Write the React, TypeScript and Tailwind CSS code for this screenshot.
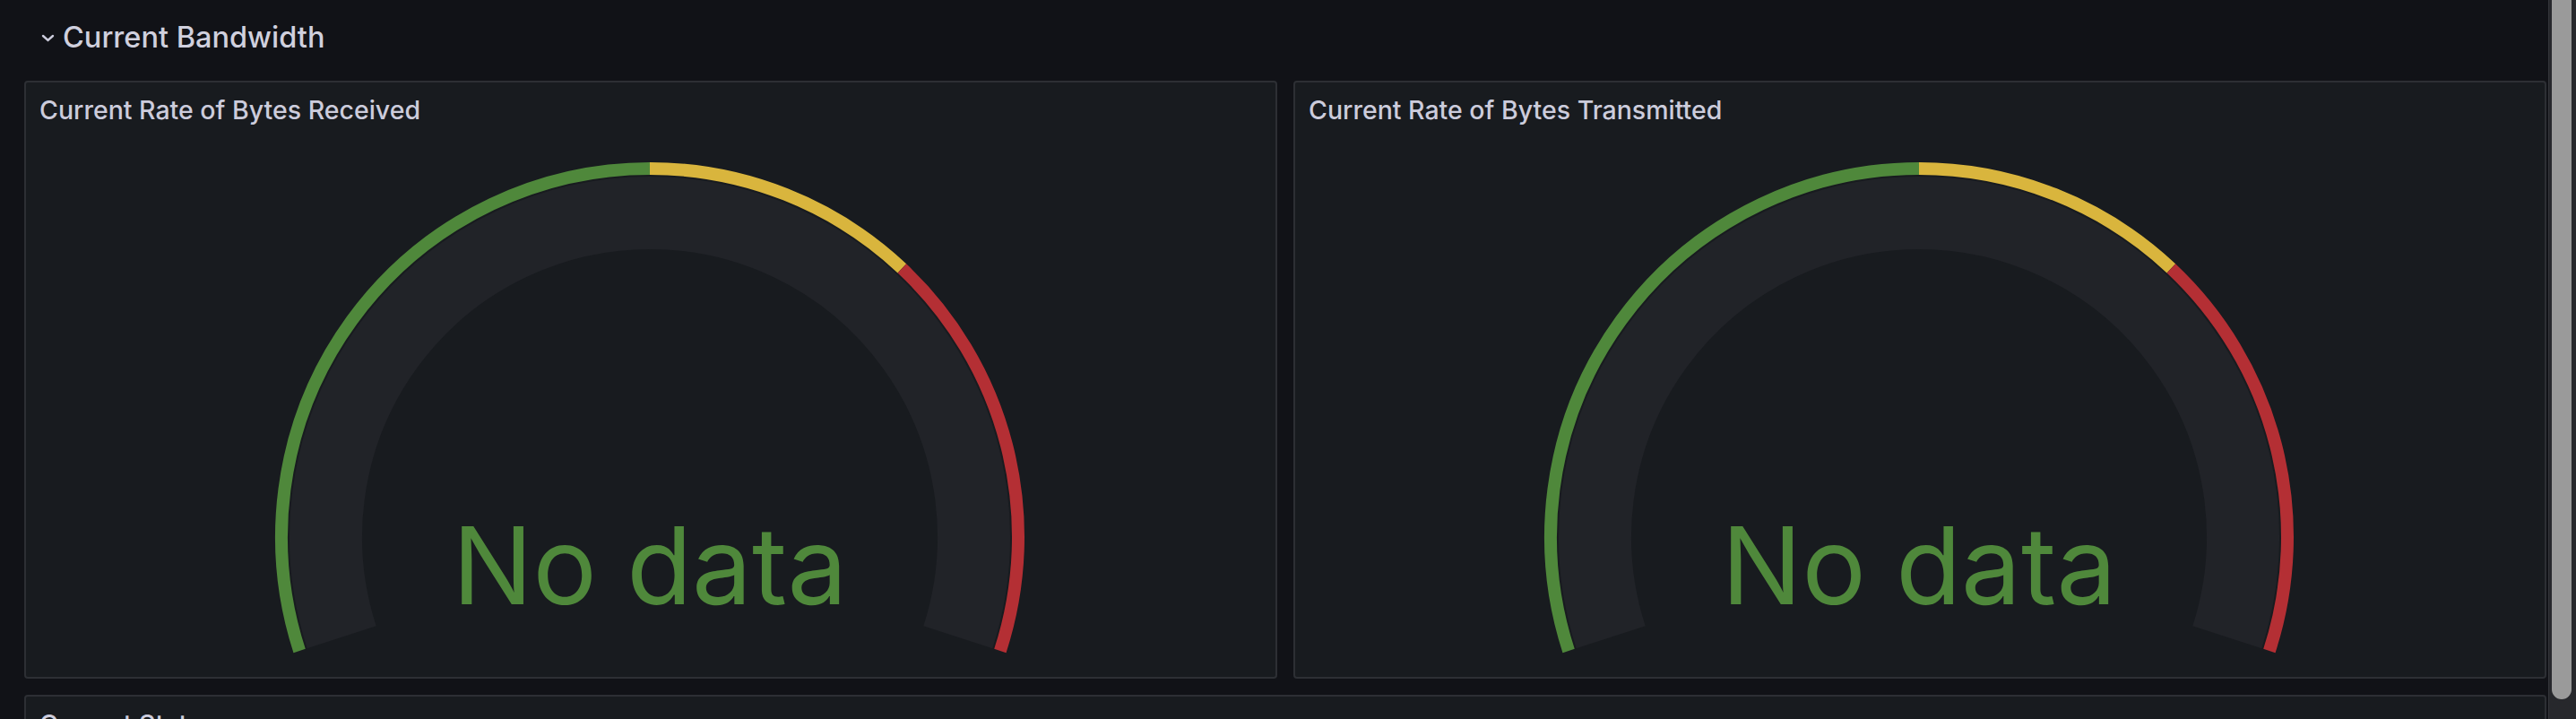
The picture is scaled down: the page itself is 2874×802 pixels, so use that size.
import React from "react";

const font = { fontFamily: "Inter, 'Noto Sans', sans-serif" };

// gauge geometry, in svg pixels
const CX = 696;
const CY = 447;
const SWEEP = 108; // degrees each side of the top

function pt(r: number, deg: number) {
  const a = (deg * Math.PI) / 180;
  return [CX + r * Math.sin(a), CY - r * Math.cos(a)];
}

function arc(r: number, from: number, to: number) {
  const [x1, y1] = pt(r, from);
  const [x2, y2] = pt(r, to);
  const large = to - from > 180 ? 1 : 0;
  return `M ${x1} ${y1} A ${r} ${r} 0 ${large} 1 ${x2} ${y2}`;
}

const thresholds = [
  { from: 0, to: 0.5, color: "#4f883b" },
  { from: 0.5, to: 0.7, color: "#d9b53d" },
  { from: 0.7, to: 1, color: "#b42f34" },
];

function Gauge() {
  const toDeg = (f: number) => -SWEEP + f * SWEEP * 2;
  return (
    <svg width={1394} height={603} className="block">
      <path d={arc(361.5, -SWEEP, SWEEP)} stroke="#212328" strokeWidth={81} fill="none" />
      {thresholds.map((t) => (
        <path
          key={t.color}
          d={arc(411, toDeg(t.from), toDeg(t.to))}
          stroke={t.color}
          strokeWidth={14}
          fill="none"
        />
      ))}
      <text
        x={CX}
        y={522}
        textAnchor="middle"
        fill="#4f883b"
        fontSize={119}
        style={font}
      >
        No data
      </text>
    </svg>
  );
}

function PanelHeader({ title }: { title: string }) {
  return (
    <div className="h-[60px] shrink-0 pl-[15px] pt-[14px]">
      <span className="text-[28.5px] leading-[34px] font-medium text-[#ccccdc]" style={font}>
        {title}
      </span>
    </div>
  );
}

function GaugePanel({ title }: { title: string }) {
  return (
    <div className="w-[1398px] h-[667px] flex flex-col rounded-[4px] border-2 border-[#2d2f34] bg-[#181b1f] overflow-hidden">
      <PanelHeader title={title} />
      <div className="flex-1">
        <Gauge />
      </div>
    </div>
  );
}

export default function App() {
  return (
    <div className="w-full h-[802px] bg-[#111217] flex overflow-hidden">
      <div className="flex-1 pl-[27px] pr-[2px]">
        <div className="h-[90px] flex items-start pt-[23px]">
          <svg width="15" height="9" viewBox="0 0 15 9" className="ml-[19px] mt-[15px]">
            <path d="M2 2 L7.5 7 L13 2" stroke="#ccccdc" strokeWidth="2.4" fill="none" strokeLinecap="round" />
          </svg>
          <span
            className="ml-[9px] text-[32.5px] leading-[38px] font-medium text-[#d0d0de]"
            style={font}
          >
            Current Bandwidth
          </span>
        </div>
        <div className="flex gap-[18px]">
          <GaugePanel title="Current Rate of Bytes Received" />
          <GaugePanel title="Current Rate of Bytes Transmitted" />
        </div>
        <div className="mt-[18px] h-[200px] rounded-[4px] border-2 border-[#2d2f34] bg-[#181b1f]">
          <PanelHeader title="Current Status" />
        </div>
      </div>
      <div className="w-[31px] shrink-0 bg-[#27282c] border-l border-[#34353a]">
        <div className="ml-[3px] w-[22px] h-[780px] rounded-b-full bg-[#9a9a9a]" />
      </div>
    </div>
  );
}
